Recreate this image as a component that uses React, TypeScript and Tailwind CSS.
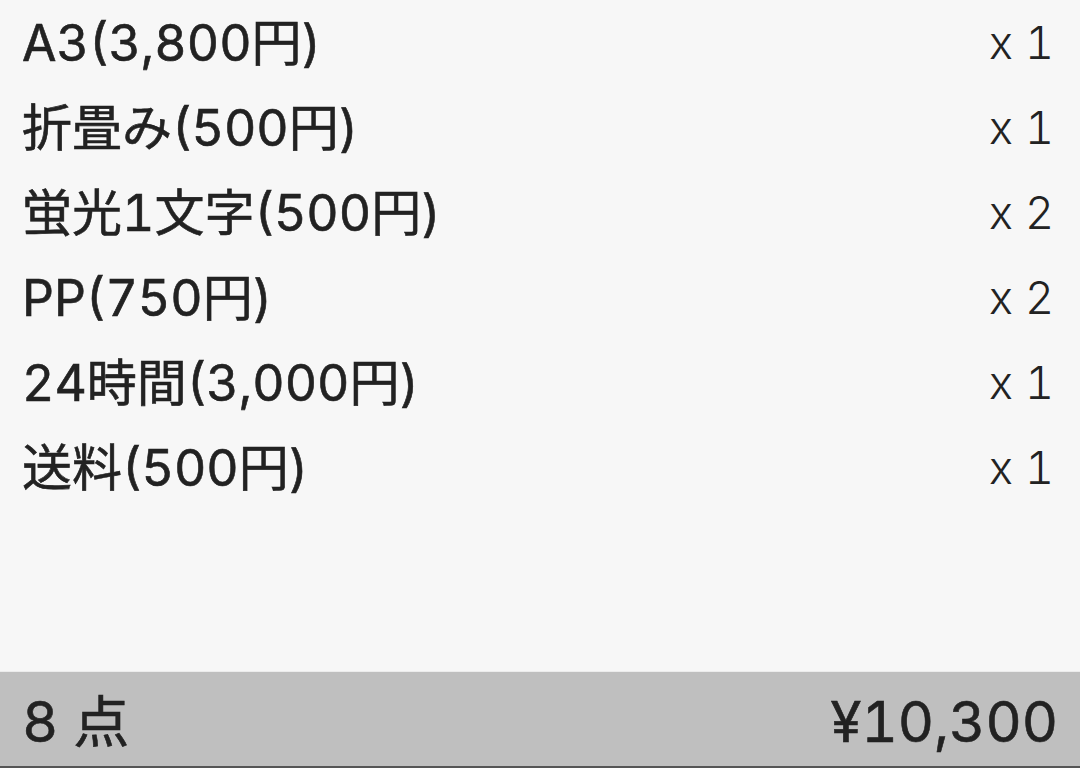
import React from "react";

const items = [
  { name: "A3(3,800円)", qty: "x 1" },
  { name: "折畳み(500円)", qty: "x 1" },
  { name: "蛍光1文字(500円)", qty: "x 2" },
  { name: "PP(750円)", qty: "x 2" },
  { name: "24時間(3,000円)", qty: "x 1" },
  { name: "送料(500円)", qty: "x 1" },
];

export default function App() {
  return (
    <div
      className="w-[1080px] h-[768px] flex flex-col bg-[#f7f7f7] text-[#222222] overflow-hidden tabular-nums"
      style={{ fontFamily: 'Inter, "Noto Sans CJK JP", sans-serif' }}
    >
      <div className="flex-1 flex flex-col">
        {items.map((it) => (
          <div key={it.name} className="h-[85px] flex items-center justify-between pl-[22px] pr-[26px]">
            <span className="text-[50px] font-normal leading-none [-webkit-text-stroke:0.6px_#222222]">{it.name}</span>
            <span className="text-[45px] font-light leading-none">{it.qty}</span>
          </div>
        ))}
      </div>
      <div className="h-[97px] border-t border-[#ececec] border-b-2 border-b-[#555555] bg-[#bfbfbf] flex items-center justify-between pl-[22px] pr-[22px] pt-[6px]">
        <span className="text-[56px] font-normal leading-none [-webkit-text-stroke:0.6px_#222222]">8 点</span>
        <span className="text-[56px] font-normal leading-none [-webkit-text-stroke:0.6px_#222222]">¥10,300</span>
      </div>
    </div>
  );
}
